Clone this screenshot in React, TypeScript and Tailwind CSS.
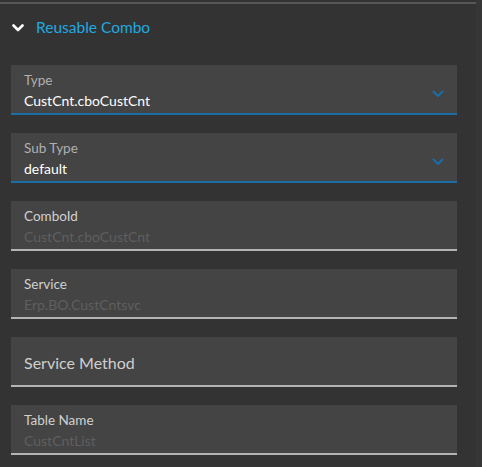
import React from 'react';

type Field = {
  label: string;
  value?: string;
  select?: boolean;
  disabled?: boolean;
};

const fields: Field[] = [
  { label: 'Type', value: 'CustCnt.cboCustCnt', select: true },
  { label: 'Sub Type', value: 'default', select: true },
  { label: 'ComboId', value: 'CustCnt.cboCustCnt', disabled: true },
  { label: 'Service', value: 'Erp.BO.CustCntsvc', disabled: true },
  { label: 'Service Method', disabled: true },
  { label: 'Table Name', value: 'CustCntList', disabled: true },
];

const Chevron: React.FC<{ className?: string; width?: number }> = ({ className, width = 2 }) => (
  <svg viewBox="0 0 12 8" className={className} fill="none" stroke="currentColor" strokeWidth={width} strokeLinecap="round" strokeLinejoin="round">
    <path d="M1.5 1.5 L6 6 L10.5 1.5" />
  </svg>
);

const FieldBox: React.FC<{ field: Field }> = ({ field }) => {
  const border = field.select
    ? 'border-b-2 border-[#1b6ea5]'
    : 'border-b-2 border-[#b4b4b4]';
  return (
    <div className={`relative h-[50px] bg-[#444444] ${border} px-[13px]`}>
      {field.value !== undefined ? (
        <div className="pt-[6px] flex flex-col">
          <div className={`text-[13.5px] leading-[18px] ${field.disabled ? 'text-[#d0d0d0]' : 'text-[#b0b0b0]'}`}>
            {field.label}
          </div>
          <div className={`text-[14px] leading-[20px] mt-[2px] ${field.disabled ? 'text-[#5f5f5f]' : 'text-white'}`}>
            {field.value}
          </div>
        </div>
      ) : (
        <div className="h-full flex items-center pt-[4px] text-[16px] leading-[20px] text-[#cfcfcf]">{field.label}</div>
      )}
      {field.select && (
        <Chevron className="absolute right-[13px] top-[25px] w-[12px] h-[8px] text-[#1b6ea5]" />
      )}
    </div>
  );
};

export default function App() {
  return (
    <div
      className="w-[482px] h-[467px] bg-[#333333] flex overflow-hidden"
      style={{ fontFamily: '"Source Sans Pro", Lato, "Noto Sans", sans-serif' }}
    >
      <div className="w-[476px] flex flex-col">
        <div className="h-[2px] mt-[2px] bg-[#575757]" />
        <div className="flex items-center h-[44px] pt-[4px] pl-[12px] gap-[12px]">
          <Chevron className="w-[12px] h-[8px] text-white" width={2.6} />
          <span className="text-[15.5px] text-[#1fa9e1]">Reusable Combo</span>
        </div>
        <div className="flex flex-col gap-[18px] pl-[11px] pr-[19px] mt-[17px]">
          {fields.map((f) => (
            <FieldBox key={f.label} field={f} />
          ))}
        </div>
      </div>
      <div className="flex-1 bg-[#363636]" />
    </div>
  );
}
